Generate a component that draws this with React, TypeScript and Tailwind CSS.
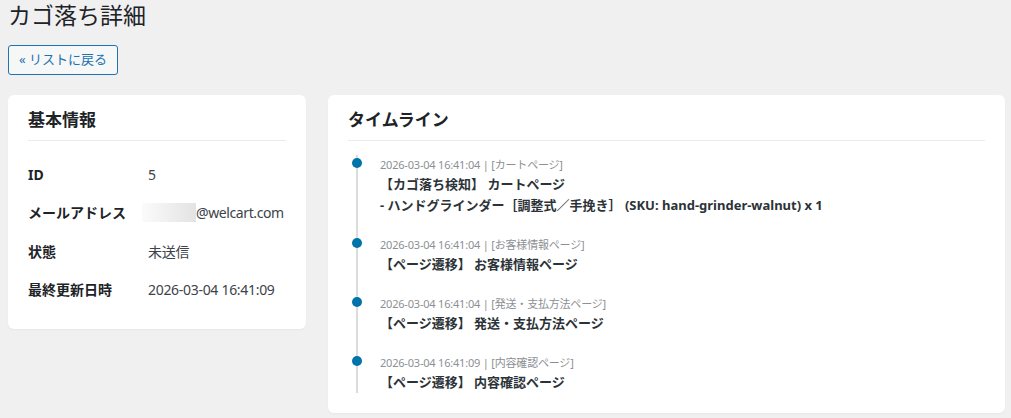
const info = [
  { label: "ID", value: "5" },
  { label: "メールアドレス", value: "email" },
  { label: "状態", value: "未送信" },
  { label: "最終更新日時", value: "2026-03-04 16:41:09" },
];

const events = [
  {
    at: "2026-03-04 16:41:04",
    page: "カートページ",
    lines: ["【カゴ落ち検知】 カートページ", "- ハンドグラインダー［調整式／手挽き］ (SKU: hand-grinder-walnut) x 1"],
  },
  { at: "2026-03-04 16:41:04", page: "お客様情報ページ", lines: ["【ページ遷移】 お客様情報ページ"] },
  { at: "2026-03-04 16:41:04", page: "発送・支払方法ページ", lines: ["【ページ遷移】 発送・支払方法ページ"] },
  { at: "2026-03-04 16:41:09", page: "内容確認ページ", lines: ["【ページ遷移】 内容確認ページ"] },
];

export default function App() {
  return (
    <div
      className="min-h-[418px] bg-[#f0f0f1] pl-2 pr-[6px] text-[#1d2327]"
      style={{ fontFamily: '"Noto Sans", "Noto Sans CJK JP", sans-serif' }}
    >
      <h1 className="text-[23px] leading-[30px] font-normal">カゴ落ち詳細</h1>

      <button className="mt-[15px] h-[30px] rounded-[3px] border border-[#2271b1] bg-[#f6f7f7] px-[10px] text-[13px] text-[#2271b1]">
        « リストに戻る
      </button>

      <div className="mt-[20px] flex items-start gap-[22px]">
        <div className="w-[298px] shrink-0 rounded-[6px] bg-white px-5 pb-[20px] pt-[13px] shadow-[0_1px_2px_rgba(0,0,0,0.04)]">
          <h2 className="border-b border-[#ebebeb] pb-[8px] text-[17px] leading-[24px] font-bold">基本情報</h2>
          <div className="mt-[14px] flex flex-col">
            {info.map((r) => (
              <div key={r.label} className="flex h-[38.5px] items-center text-[14px]">
                <span className="w-[120px] shrink-0 font-bold">{r.label}</span>
                {r.value === "email" ? (
                  <span className="-ml-[6px] flex items-center tracking-[-0.4px] text-[#3c434a]">
                    <span className="h-[19px] w-[54px] bg-gradient-to-r from-[#fbfbfb] via-[#efefef] to-[#e3e3e3]" />
                    @welcart.com
                  </span>
                ) : (
                  <span className="tracking-[-0.3px] text-[#3c434a]">{r.value}</span>
                )}
              </div>
            ))}
          </div>
        </div>

        <div className="flex-1 rounded-[6px] bg-white px-5 pb-[20px] pt-[13px] shadow-[0_1px_2px_rgba(0,0,0,0.04)]">
          <h2 className="border-b border-[#ebebeb] pb-[8px] text-[17px] leading-[24px] font-bold">タイムライン</h2>
          <div className="relative ml-[8px] mt-[14px] border-l-2 border-[#dcdcde] pl-[22px]">
            {events.map((e, i) => (
              <div key={i} className="relative mb-[19px] last:mb-0">
                <span className="absolute left-[-28px] top-[3px] h-[10px] w-[10px] rounded-full bg-[#0073aa]" />
                <div className="text-[11px] leading-[19px] tracking-[-0.2px] text-[#8c8f94]">
                  {e.at} | [{e.page}]
                </div>
                {e.lines.map((l) => (
                  <div key={l} className="text-[13px] leading-[21px] font-bold text-[#2c3338]">
                    {l}
                  </div>
                ))}
              </div>
            ))}
          </div>
        </div>
      </div>
    </div>
  );
}
